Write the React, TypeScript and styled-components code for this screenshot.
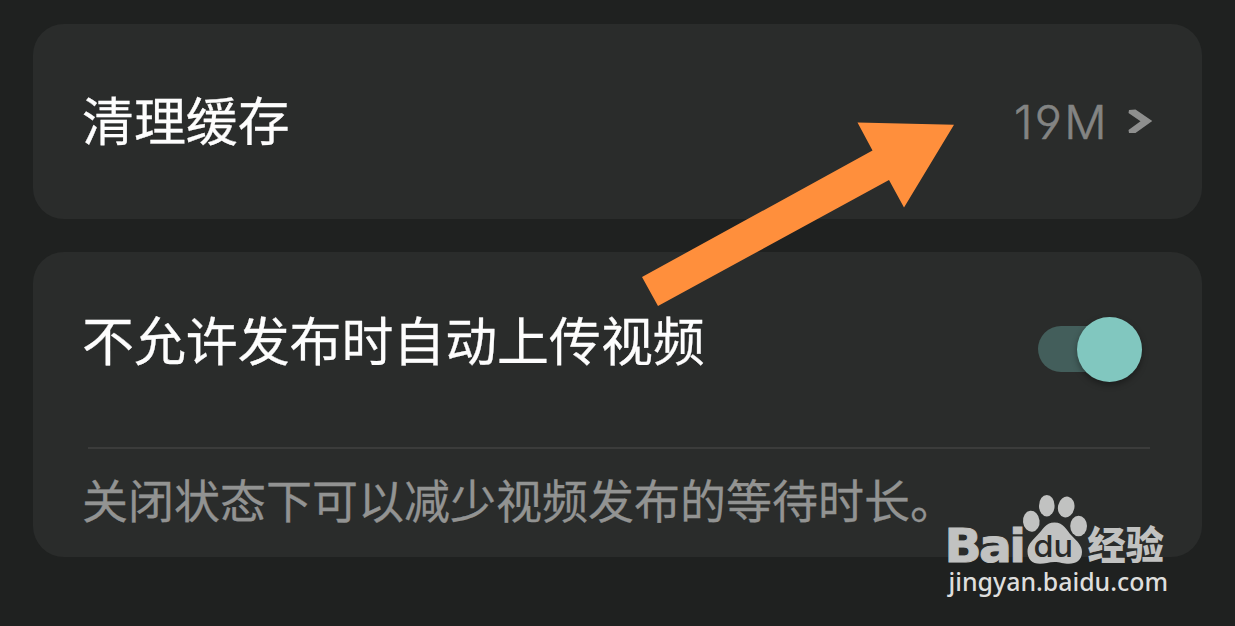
import React from 'react'
import styled, { createGlobalStyle } from 'styled-components'

type SwitchProps = {
  checked: boolean
}

const Switch: React.FC<SwitchProps> = ({ checked }) => (
  <SwitchTrack type="button" role="switch" aria-checked={checked} $checked={checked}>
    <SwitchThumb $checked={checked} />
  </SwitchTrack>
)

const Chevron = () => (
  <svg width="26" height="28" viewBox="0 0 26 28" fill="none">
    <path d="M1 2 L7.5 1.5 L24.3 13 L7.5 25 L1 25 L0.5 22 L12.5 13.3 L0.5 5 Z" fill="#8e8f8e" />
  </svg>
)

const Arrow = () => (
  <svg width="314" height="186" viewBox="0 0 314 186">
    <path d="M2 156 L232.5 29.5 L217.5 1.5 L314 3.8 L264 86.5 L249 59 L18 185 Z" fill="#ff8f3c" />
  </svg>
)

const BaiduMark = () => (
  <svg width="240" height="124" viewBox="938 490 240 124">
    <g fill="#c1c2c1">
      <BrandText x="944.5" y="561.5" textLength="79" lengthAdjust="spacingAndGlyphs">
        Bai
      </BrandText>
      <ellipse cx="1031.3" cy="521.3" rx="8.3" ry="10.5" transform="rotate(-6 1031.3 521.3)" />
      <ellipse cx="1046.8" cy="505.7" rx="7.8" ry="10.8" />
      <ellipse cx="1066.2" cy="507" rx="8.2" ry="10.5" transform="rotate(12 1066.2 507)" />
      <ellipse cx="1078.6" cy="526" rx="8.4" ry="10.3" />
      <path d="M1054.5 522.5 C1064 522.5 1066 530 1072 536 C1078 542 1082 546 1082 552 C1082 560 1076 563.8 1069 563.8 C1063 563.8 1060 562 1054.5 562 C1049 562 1045 563.8 1040 563.8 C1032 563.8 1027.5 559 1027.5 551.5 C1027.5 545 1031 542 1037 535.5 C1043 530 1045 522.5 1054.5 522.5 Z" />
      <text x="1087.5" y="558.5" fontSize="38.5" fontWeight="900" textLength="76.5" lengthAdjust="spacingAndGlyphs">
        经验
      </text>
    </g>
    <text x="1033.5" y="556.8" fontSize="30" fontWeight="500" fill="#292a29" textLength="39.5" lengthAdjust="spacingAndGlyphs">
      du
    </text>
    <SiteText x="948.5" y="591" textLength="219.5" lengthAdjust="spacingAndGlyphs">
      jingyan.baidu.com
    </SiteText>
  </svg>
)

const App: React.FC = () => (
  <Page>
    <GlobalStyle />
    <CacheCard>
      <Label>清理缓存</Label>
      <Value>
        <Size>19M</Size>
        <Chevron />
      </Value>
    </CacheCard>
    <UploadCard>
      <UploadRow>
        <Label>不允许发布时自动上传视频</Label>
        <Switch checked />
      </UploadRow>
      <Divider />
      <Description>关闭状态下可以减少视频发布的等待时长。</Description>
    </UploadCard>
    <Pointer>
      <Arrow />
    </Pointer>
    <Watermark>
      <BaiduMark />
    </Watermark>
  </Page>
)

const GlobalStyle = createGlobalStyle`
  body {
    margin: 0;
    background: #1f2120;
  }
`

const Page = styled.div`
  position: relative;
  display: flex;
  flex-direction: column;
  gap: 33px;
  box-sizing: border-box;
  width: 1235px;
  height: 626px;
  padding: 24px 33px 0;
  overflow: hidden;
  background: #1f2120;
  font-family: 'Noto Sans CJK SC', sans-serif;
`

const Card = styled.section`
  box-sizing: border-box;
  border-radius: 31px;
  background: #2a2c2b;
`

const Label = styled.span`
  color: #fdfdfd;
  font-size: 51.9px;
  line-height: 76px;
  white-space: nowrap;
  -webkit-text-stroke: 0.3px #fdfdfd;
`

const CacheCard = styled(Card)`
  display: flex;
  align-items: center;
  justify-content: space-between;
  height: 195px;
  padding: 0 48px 0 49px;

  ${Label} {
    margin-top: -5px;
  }
`

const UploadCard = styled(Card)`
  height: 305px;
  padding: 0 52px 0 49px;
`

const UploadRow = styled.div`
  display: flex;
  align-items: center;
  justify-content: space-between;
  height: 195px;
  padding-right: 8px;

  ${Label} {
    margin-top: -22px;
  }
`

const Value = styled.div`
  display: flex;
  align-items: center;
  gap: 19px;
`

const Size = styled.span`
  color: #838483;
  font-family: Inter, sans-serif;
  font-size: 47px;
  font-weight: 300;
  font-feature-settings: 'ss01';
  letter-spacing: 2.4px;
  line-height: 56px;
  -webkit-text-stroke: 0.6px #838483;
`

const SwitchTrack = styled.button<{ $checked: boolean }>`
  display: flex;
  align-items: center;
  justify-content: ${({ $checked }) => ($checked ? 'flex-end' : 'flex-start')};
  width: 104px;
  height: 46px;
  margin-top: -1px;
  padding: 0;
  border: 0;
  border-radius: 23px;
  background: ${({ $checked }) => ($checked ? '#435e5b' : '#4a4b4a')};
`

const SwitchThumb = styled.span<{ $checked: boolean }>`
  flex: none;
  width: 65px;
  height: 65px;
  border-radius: 50%;
  background: ${({ $checked }) => ($checked ? '#81c7bf' : '#b9b9b9')};
  box-shadow: 0 3px 6px rgba(0, 0, 0, 0.35);
`

const Divider = styled.div`
  height: 2px;
  margin-left: 6px;
  background: #3b3c3b;
`

const Description = styled.p`
  margin: 15px 0 0;
  color: #929392;
  font-size: 46px;
  line-height: 68px;
  white-space: nowrap;
  -webkit-text-stroke: 0.3px #929392;
`

const Pointer = styled.div`
  position: absolute;
  top: 121px;
  left: 640px;
  line-height: 0;
`

const Watermark = styled.div`
  position: absolute;
  top: 490px;
  left: 938px;
  font-family: Inter, 'Noto Sans CJK SC', sans-serif;
  line-height: 0;
`

const BrandText = styled.text`
  font-family: 'DejaVu Sans', sans-serif;
  font-size: 47px;
  font-weight: 700;
  letter-spacing: -2.5px;
  stroke: #c1c2c1;
  stroke-width: 1px;
`

const SiteText = styled.text`
  fill: #dededd;
  font-family: 'Noto Sans', sans-serif;
  font-size: 26px;
  font-weight: 500;
`

export default App
